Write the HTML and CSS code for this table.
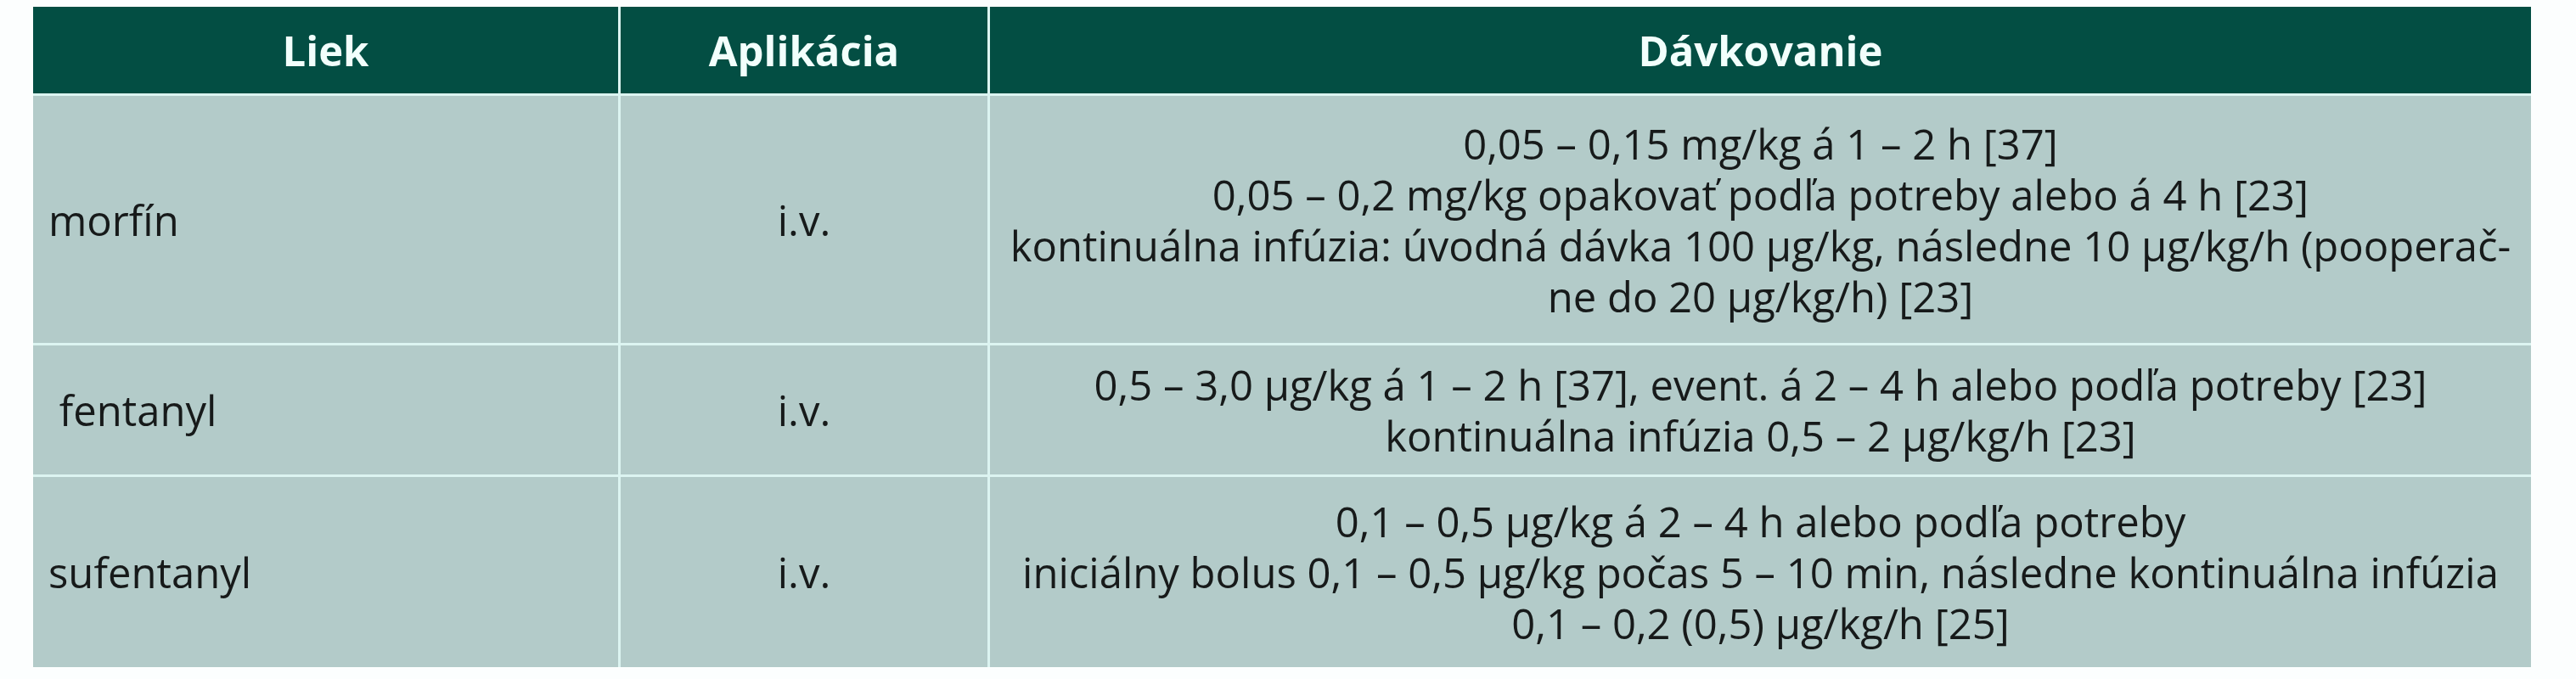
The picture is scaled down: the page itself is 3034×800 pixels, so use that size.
FILE: index.html
```html
<!DOCTYPE html>
<html lang="sk">
<head>
<meta charset="utf-8">
<title>Liek – dávkovanie</title>
<link rel="stylesheet" href="styles.css">
</head>
<body>
<div class="page">
  <div class="dose-table" role="table">
    <div class="cell head" role="columnheader">Liek</div>
    <div class="cell head" role="columnheader">Aplikácia</div>
    <div class="cell head" role="columnheader">Dávkovanie</div>

    <div class="cell drug" role="cell">morfín</div>
    <div class="cell route" role="cell">i.v.</div>
    <div class="cell dose" role="cell">0,05 – 0,15 mg/kg á 1 – 2 h [37]<br>0,05 – 0,2 mg/kg opakovať podľa potreby alebo á 4 h [23]<br>kontinuálna infúzia: úvodná dávka 100 µg/kg, následne 10 µg/kg/h (pooperač-<br>ne do 20 µg/kg/h) [23]</div>

    <div class="cell drug" role="cell">&nbsp;fentanyl</div>
    <div class="cell route" role="cell">i.v.</div>
    <div class="cell dose" role="cell">0,5 – 3,0 µg/kg á 1 – 2 h [37], event. á 2 – 4 h alebo podľa potreby [23]<br>kontinuálna infúzia 0,5 – 2 µg/kg/h [23]</div>

    <div class="cell drug" role="cell">sufentanyl</div>
    <div class="cell route" role="cell">i.v.</div>
    <div class="cell dose" role="cell">0,1 – 0,5 µg/kg á 2 – 4 h alebo podľa potreby<br>iniciálny bolus 0,1 – 0,5 µg/kg počas 5 – 10 min, následne kontinuálna infúzia<br>0,1 – 0,2 (0,5) µg/kg/h [25]</div>
  </div>
</div>
</body>
</html>
```

FILE: styles.css
```css
html, body {
  margin: 0;
  padding: 0;
  background: #fcfefe;
}

.page {
  padding: 8px 0 0 39px;
  font-family: "Open Sans", "Noto Sans", sans-serif;
}

.dose-table {
  display: grid;
  width: 2942px;
  grid-template-columns: 689px 432px 1815px;
  grid-template-rows: 102px 291px 152px 224px;
  gap: 3px;
  background: #dcf4f1;
}

.cell {
  display: flex;
  align-items: center;
  background: #b3cbc9;
  color: #171a1a;
  font-size: 49px;
  line-height: 60px;
  white-space: nowrap;
}

.head {
  justify-content: center;
  background: #034e43;
  color: #f2fffc;
  font-weight: 700;
}

.drug {
  padding-left: 18px;
}

.route {
  justify-content: center;
}

.dose {
  justify-content: center;
  text-align: center;
}
```
